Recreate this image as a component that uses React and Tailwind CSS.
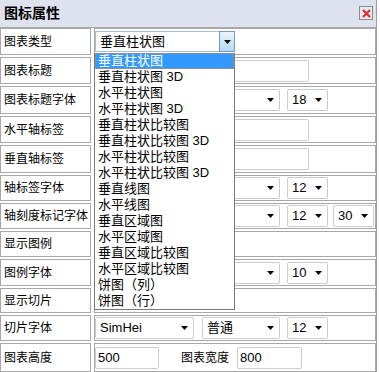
import React from "react"

const chartTypes = [
  "垂直柱状图",
  "垂直柱状图 3D",
  "水平柱状图",
  "水平柱状图 3D",
  "垂直柱状比较图",
  "垂直柱状比较图 3D",
  "水平柱状比较图",
  "水平柱状比较图 3D",
  "垂直线图",
  "水平线图",
  "垂直区域图",
  "水平区域图",
  "垂直区域比较图",
  "水平区域比较图",
  "饼图（列）",
  "饼图（行）",
]

function Caret() {
  return (
    <svg width="7" height="4" viewBox="0 0 7 4" className="block">
      <path d="M0 0h7L3.5 4z" fill="#000" />
    </svg>
  )
}

function Select({ value, className }) {
  return (
    <div
      className={`relative flex items-center h-[22px] border border-[#c8ccd5] rounded-[2px] bg-white pl-[4px] text-[13px] text-black ${className}`}
    >
      <span>{value}</span>
      <span className="absolute right-[5px] top-[8px]">
        <Caret />
      </span>
    </div>
  )
}

function Input({ value, className }) {
  return (
    <div
      className={`flex items-center h-[22px] border border-[#c8ccd5] rounded-[2px] bg-white pl-[2px] text-[13px] text-black ${className}`}
    >
      {value}
    </div>
  )
}

// covered = row sits under the open list, so the left selects show no text
function FontRow({ size, extra, covered }) {
  return (
    <>
      <Select value={covered ? "" : "SimHei"} className="w-[99px]" />
      <Select value={covered ? "" : "普通"} className="w-[78px] ml-[8px]" />
      <Select value={size} className="w-[41px] ml-[7px]" />
      {extra && <Select value={extra} className="w-[41px] ml-[5px]" />}
    </>
  )
}

const rows = [
  {
    label: "图表类型",
    h: "h-[27px]",
    content: (
      <div className="flex h-[21px] w-[140px] border border-[#a9bdd4] bg-white">
        <div className="flex-1 flex items-center pl-[4px] text-[13px]">垂直柱状图</div>
        <div className="w-[16px] -my-[1px] -mr-[1px] flex items-center justify-center border border-[#6f9acb] bg-gradient-to-b from-[#eaf5fd] to-[#b3d9f4]">
          <Caret />
        </div>
      </div>
    ),
  },
  { label: "图表标题", h: "h-[27px]", content: <Input value="" className="w-[214px]" /> },
  { label: "图表标题字体", h: "h-[28px]", content: <FontRow size="18" covered /> },
  { label: "水平轴标签", h: "h-[27px]", content: <Input value="" className="w-[214px]" /> },
  { label: "垂直轴标签", h: "h-[28px]", content: <Input value="" className="w-[214px]" /> },
  { label: "轴标签字体", h: "h-[26px]", content: <FontRow size="12" covered /> },
  { label: "轴刻度标记字体", h: "h-[26px]", content: <FontRow size="12" extra="30" covered /> },
  { label: "显示图例", h: "h-[26px]", content: null },
  { label: "图例字体", h: "h-[27px]", content: <FontRow size="10" covered /> },
  { label: "显示切片", h: "h-[25px]", content: null },
  { label: "切片字体", h: "h-[26px]", content: <FontRow size="12" /> },
  {
    label: "图表高度",
    h: "h-[29px]",
    content: (
      <>
        <Input value="500" className="w-[64px]" />
        <span className="ml-[22px] text-[12px]">图表宽度</span>
        <Input value="800" className="w-[65px] ml-[8px]" />
      </>
    ),
  },
]

export default function App() {
  return (
    <div className="relative w-[377px] h-[372px] overflow-hidden bg-white border-r border-[#a0a0a0] text-black [font-family:'Liberation_Sans','Noto_Sans_CJK_SC',sans-serif]">
      {/* title bar */}
      <div className="h-[28px] flex items-center justify-between pl-[4px] pr-[3px] bg-[#dee1ee] border-b border-[#a8a8a8]">
        <span className="text-[14px] font-bold">图标属性</span>
        <div className="w-[14px] h-[14px] flex items-center justify-center border border-[#8c8c8c] bg-[#e8e9f0] mt-[-1px]">
          <svg width="9" height="9" viewBox="0 0 9 9">
            <path d="M1 1L8 8M8 1L1 8" stroke="#d9363a" strokeWidth="2.4" />
          </svg>
        </div>
      </div>

      {/* property rows */}
      <div className="flex flex-col gap-[2px]">
        {rows.map((r) => (
          <div key={r.label} className={`flex gap-[3px] ${r.h}`}>
            <div className="w-[91px] flex items-center pl-[3px] border border-[#a8a8a8] text-[12px] whitespace-nowrap">
              {r.label}
            </div>
            <div className="w-[282px] flex items-center border border-[#a8a8a8]">{r.content}</div>
          </div>
        ))}
      </div>

      {/* open chart type list */}
      <div className="absolute left-[94px] top-[53px] w-[141px] bg-white border-x border-b border-[#7a7a7a]">
        {chartTypes.map((t, i) => (
          <div
            key={t}
            className={`h-[16px] flex items-center pl-[3px] text-[13px] whitespace-nowrap ${
              i === 0 ? "bg-[#3399ff] text-white outline-1 outline-dotted outline-[#d98a3a] -outline-offset-1" : ""
            }`}
          >
            {t}
          </div>
        ))}
      </div>
    </div>
  )
}
